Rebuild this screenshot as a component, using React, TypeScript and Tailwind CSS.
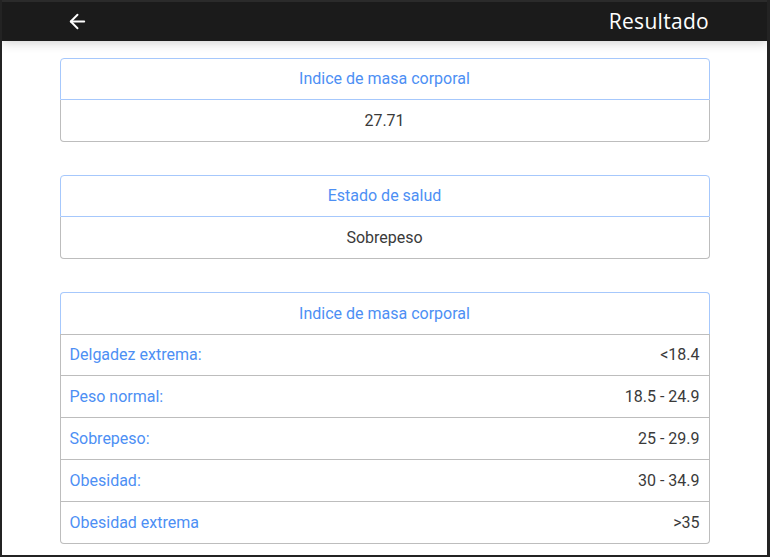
import { ArrowLeft } from 'lucide-react';

const rangos = [
  { label: 'Delgadez extrema:', value: '<18.4' },
  { label: 'Peso normal:', value: '18.5 - 24.9' },
  { label: 'Sobrepeso:', value: '25 - 29.9' },
  { label: 'Obesidad:', value: '30 - 34.9' },
  { label: 'Obesidad extrema', value: '>35' },
];

function ResultCard({ title, value }: { title: string; value: string }) {
  return (
    <div className="w-[650px] mx-auto">
      <div className="h-[42px] flex items-center justify-center border border-[#a6c8fc] rounded-t-[4px] text-[#4d8ff4]">
        {title}
      </div>
      <div className="h-[42px] flex items-center justify-center border-x border-b border-[#bdbdbd] rounded-b-[4px] text-[#3a3a3a]">
        {value}
      </div>
    </div>
  );
}

export default function App() {
  return (
    <div className="h-[557px] w-[770px] overflow-hidden bg-white border-l-2 border-r-[3px] border-b-2 border-[#232323] font-['Roboto',sans-serif] text-[16px]">
      <header className="relative h-[41px] bg-[#1b1b1b] border-t-2 border-[#2b2b2b] flex items-center justify-between pl-[64px] pr-[58px] shadow-[0_2px_10px_rgba(0,0,0,0.18)]">
        <ArrowLeft size={23} strokeWidth={2} className="text-white" />
        <span className="text-white text-[21px] font-['Open_Sans',sans-serif] tracking-[0.3px]">Resultado</span>
      </header>

      <main className="pt-[17px] flex flex-col gap-[33px]">
        <ResultCard title="Indice de masa corporal" value="27.71" />
        <ResultCard title="Estado de salud" value="Sobrepeso" />

        <div className="w-[650px] mx-auto">
          <div className="h-[42px] flex items-center justify-center border border-b-0 border-[#a6c8fc] rounded-t-[4px] text-[#4d8ff4]">
            Indice de masa corporal
          </div>
          {rangos.map((r, i) => (
            <div
              key={r.label}
              className={`h-[42px] flex items-center justify-between px-[9px] border border-[#bdbdbd] ${i > 0 ? 'border-t-0' : ''} ${i === rangos.length - 1 ? 'rounded-b-[4px]' : ''}`}
            >
              <span className="text-[#4d8ff4]">{r.label}</span>
              <span className="text-[#3a3a3a]">{r.value}</span>
            </div>
          ))}
        </div>
      </main>
    </div>
  );
}
